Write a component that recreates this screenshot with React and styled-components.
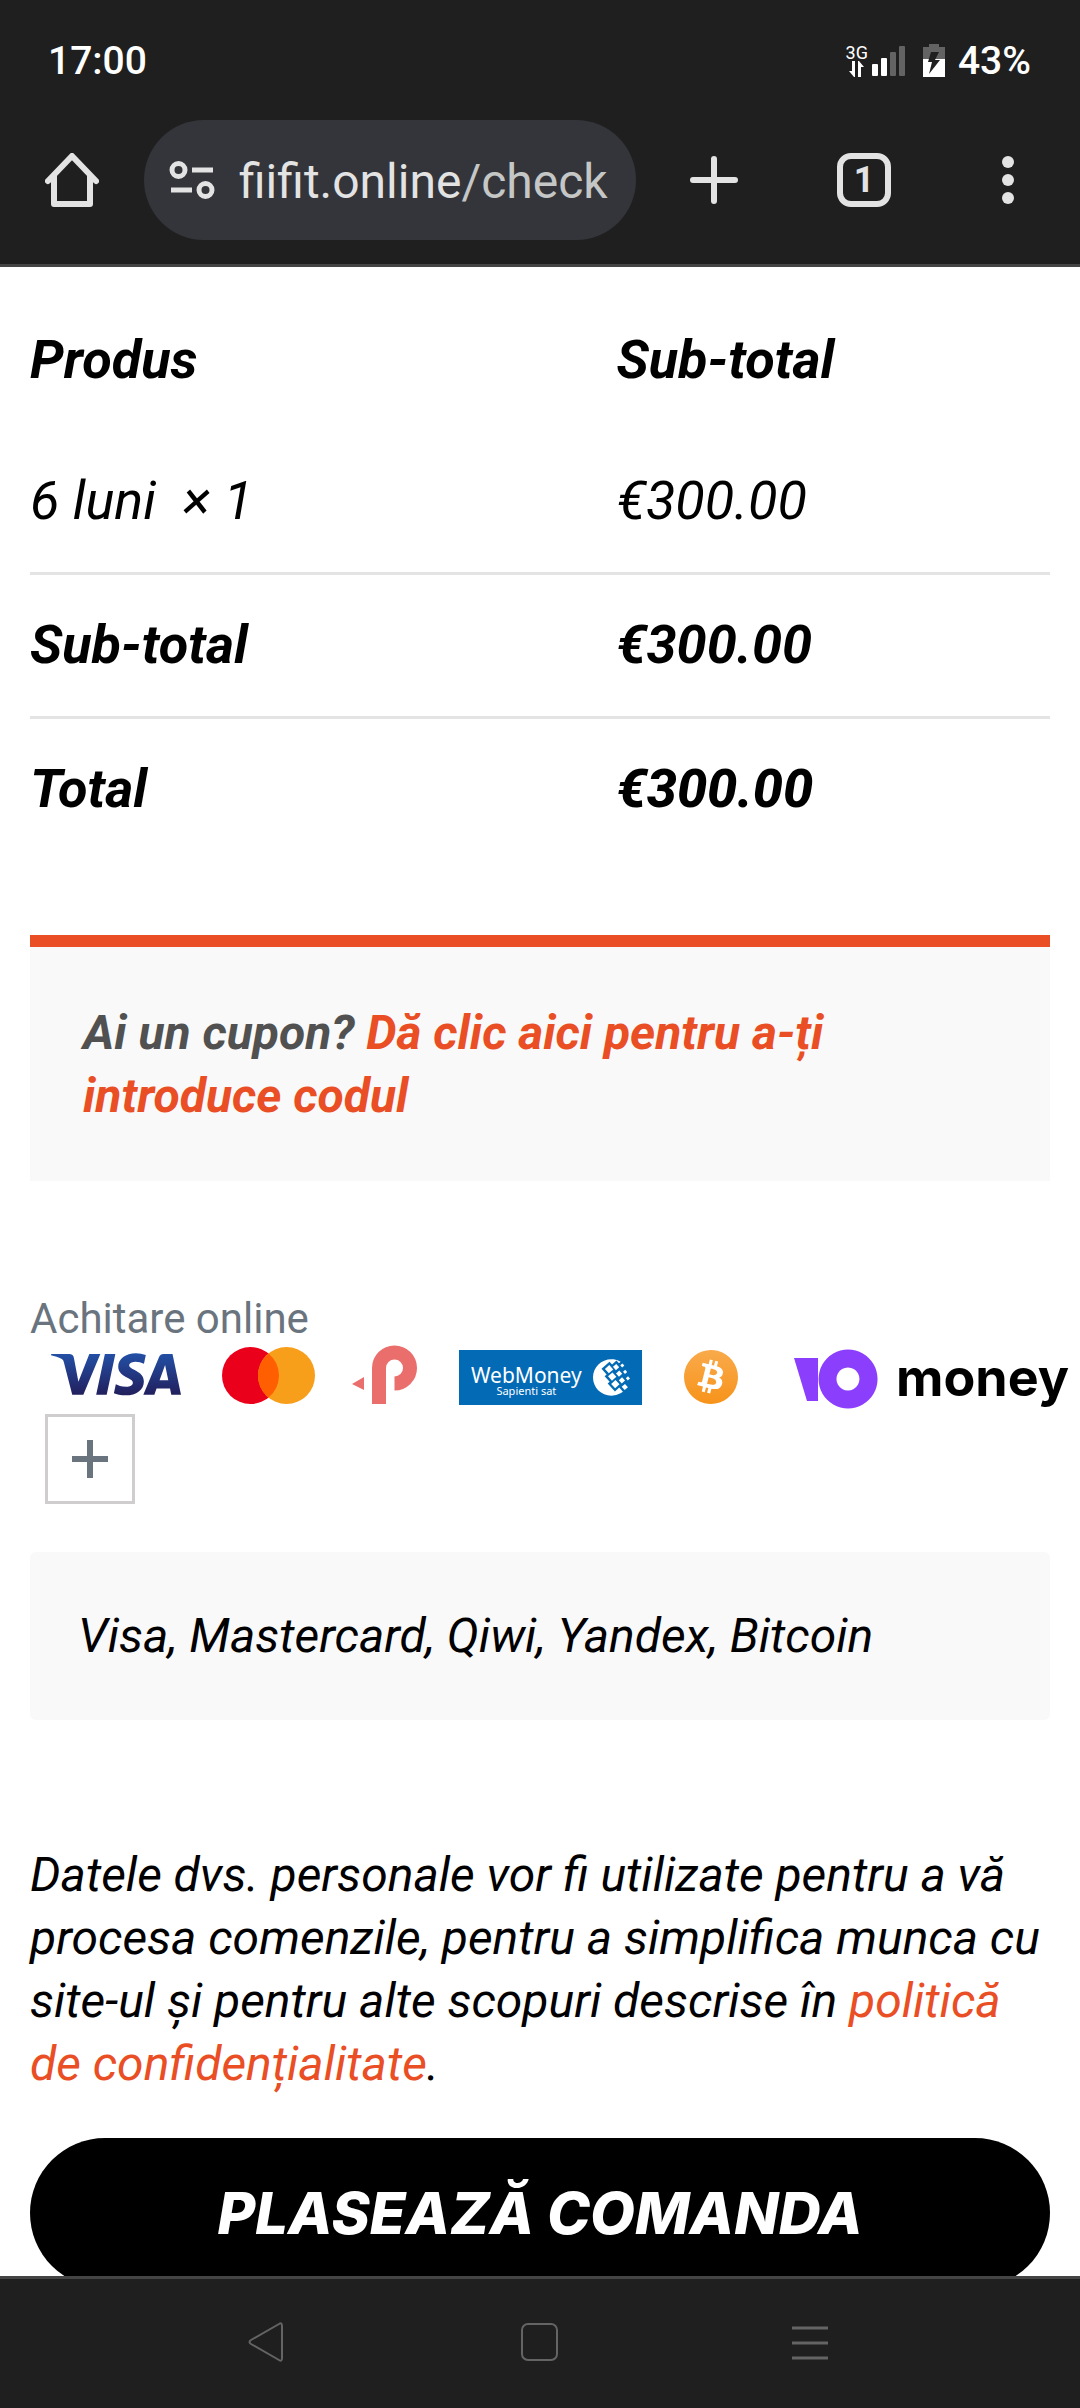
import React from "react";
import styled, { createGlobalStyle } from "styled-components";
import { SiBitcoin, SiVisa, SiWebmoney } from "react-icons/si";

const ORDER_ROWS = [
  { label: "6 luni\u00a0 × 1", price: "€300.00", weight: 400, priceWeight: 400 },
  { label: "Sub-total", price: "€300.00", weight: 700, priceWeight: 700 },
  { label: "Total", price: "€300.00", weight: 700, priceWeight: 800 },
];

function StatusIcons() {
  return (
    <StatusGroup>
      <Signal>
        <NetworkType>
          <span>3G</span>
          <svg width="15" height="16" viewBox="0 0 15 16" fill="#fff">
            <path d="M3 0h3v16H5L0 10h3zM9 16V0h1l5 6h-3v10z" />
          </svg>
        </NetworkType>
        <svg width="34" height="32" viewBox="0 0 34 32" fill="#fff">
          <rect x="0" y="19" width="6" height="12" rx="1" />
          <rect x="9" y="13" width="6" height="18" rx="1" />
          <rect x="18" y="7" width="6" height="24" rx="1" fill="#636363" />
          <rect x="27" y="1" width="6" height="30" rx="1" fill="#636363" />
        </svg>
      </Signal>
      <svg width="22" height="34" viewBox="0 0 22 34">
        <path d="M6 0h10v3h6v13H0V3h6z" fill="#636363" />
        <path d="M0 15h22v18H0z" fill="#fff" />
        <path d="M8 8h8l-4 8h5L6 30l3-12H5z" fill="#1f1f1f" />
      </svg>
      <StatusText>43%</StatusText>
    </StatusGroup>
  );
}

function BrowserHeader() {
  return (
    <Header>
      <StatusBar>
        <StatusText>17:00</StatusText>
        <StatusIcons />
      </StatusBar>
      <Toolbar>
        <IconButton aria-label="Home">
          <svg width="54" height="54" viewBox="0 0 54 54" {...lineIcon}>
            <path d="M3 28 27 3l24 25M9 22v29h36V22" />
          </svg>
        </IconButton>
        <AddressBar>
          <svg
            width="46"
            height="38"
            viewBox="0 0 46 38"
            fill="none"
            stroke="#e3e3e3"
            strokeWidth="5"
          >
            <circle cx="9.500" cy="9" r="6.500" />
            <circle cx="36.500" cy="29" r="6.500" />
            <path d="M23 9h21M2 29h21" />
          </svg>
          <Url>
            fiifit.online<UrlPath>/check</UrlPath>
          </Url>
        </AddressBar>
        <Actions>
          <IconButton aria-label="New tab">
            <svg width="54" height="54" viewBox="0 0 54 54" {...lineIcon}>
              <path d="M27 6v42M6 27h42" />
            </svg>
          </IconButton>
          <TabsButton aria-label="Open tabs">1</TabsButton>
          <IconButton aria-label="More">
            <svg width="42" height="54" viewBox="0 0 42 54" fill="#e3e3e3">
              <circle cx="21" cy="9" r="6" />
              <circle cx="21" cy="27" r="6" />
              <circle cx="21" cy="45" r="6" />
            </svg>
          </IconButton>
        </Actions>
      </Toolbar>
    </Header>
  );
}

function OrderTable() {
  return (
    <Table>
      <thead>
        <tr>
          <HeadCell scope="col">Produs</HeadCell>
          <HeadCell scope="col">Sub-total</HeadCell>
        </tr>
      </thead>
      <tbody>
        {ORDER_ROWS.map((row) => (
          <OrderRow key={row.label}>
            <Cell $weight={row.weight}>{row.label}</Cell>
            <Cell $weight={row.priceWeight}>{row.price}</Cell>
          </OrderRow>
        ))}
      </tbody>
    </Table>
  );
}

function PaymentLogos() {
  return (
    <Logos>
      <svg width="0" height="0" aria-hidden="true">
        <defs>
          <linearGradient id="visaBlue" x1="0" y1="0" x2="0" y2="1">
            <stop offset="0" stopColor="#2350a6" />
            <stop offset="1" stopColor="#221f5c" />
          </linearGradient>
          <linearGradient id="bitcoinOrange" x1="0" y1="0" x2="0" y2="1">
            <stop offset="0" stopColor="#f9aa4b" />
            <stop offset="1" stopColor="#f7931a" />
          </linearGradient>
        </defs>
      </svg>
      <VisaLogo viewBox="0 7.7 24 9.6" fill="url(#visaBlue)" strokeWidth="0" />
      <svg width="94" height="60" viewBox="0 0 94 60">
        <circle cx="28.500" cy="28.500" r="28.500" fill="#eb001b" />
        <circle cx="64.500" cy="28.500" r="28.500" fill="#f79e1b" />
        <path d="M46.500 6.400a28.500 28.500 0 0 1 0 44.200a28.500 28.500 0 0 1 0-44.200" fill="#ff5f00" />
      </svg>
      <svg width="71" height="64" viewBox="0 -2 71 64">
        <path d="M0 37l12-7v13z" fill="#ea6e6c" />
        <path
          d="M27 57V21a15.500 15.500 0 1 1 15.500 15.500"
          fill="none"
          stroke="#ea6e6c"
          strokeWidth="14"
        />
      </svg>
      <WebMoney>
        <WebMoneyText>
          WebMoney
          <small>Sapienti sat</small>
        </WebMoneyText>
        <SiWebmoney size={37} />
      </WebMoney>
      <BitcoinLogo fill="url(#bitcoinOrange)" strokeWidth="0" />
      <YooMoney>
        <svg width="84" height="64" viewBox="0 -2 84 64" fill="#8b3ffd">
          <path d="M0 11h24v43H13z" />
          <path
            fillRule="evenodd"
            d="M54 2.500a29.500 29.500 0 1 0 .1 0zM54 20.500a11.500 11.500 0 1 1-.1 0z"
          />
        </svg>
        money
      </YooMoney>
    </Logos>
  );
}

function SystemNav() {
  return (
    <NavBar>
      <IconButton aria-label="Back">
        <svg width="40" height="40" viewBox="0 0 40 40" {...navIcon}>
          <path d="M31 2Q34 0 34 4v32q0 4-3 2L3 22q-3-2 0-4z" />
        </svg>
      </IconButton>
      <IconButton aria-label="Home screen">
        <svg width="40" height="40" viewBox="0 0 40 40" {...navIcon}>
          <rect x="2" y="2" width="35" height="36" rx="6" />
        </svg>
      </IconButton>
      <IconButton aria-label="Recent apps">
        <svg width="40" height="40" viewBox="0 0 40 40" {...navIcon} strokeWidth="3">
          <path d="M0 6h36M0 21h36M0 36h36" />
        </svg>
      </IconButton>
    </NavBar>
  );
}

export default function App() {
  return (
    <>
      <GlobalStyle />
      <Screen>
        <BrowserHeader />
        <Main>
          <OrderTable />
          <Coupon>
            Ai un cupon? <a href="#cupon">Dă clic aici pentru a-ți introduce codul</a>
          </Coupon>
          <PaymentTitle>Achitare online</PaymentTitle>
          <PaymentLogos />
          <MoreButton aria-label="Mai multe metode">
            <svg width="36" height="38" viewBox="0 0 36 38" stroke="#6a747e" strokeWidth="6">
              <path d="M18 0v38M0 19h36" />
            </svg>
          </MoreButton>
          <PaymentInfo>Visa, Mastercard, Qiwi, Yandex, Bitcoin</PaymentInfo>
          <Privacy>
            Datele dvs. personale vor fi utilizate pentru a vă procesa comenzile,
            pentru a simplifica munca cu site-ul și pentru alte scopuri descrise în{" "}
            <a href="#politica">politică de confidențialitate</a>.
          </Privacy>
          <SubmitButton type="submit">Plasează comanda</SubmitButton>
        </Main>
        <SystemNav />
      </Screen>
    </>
  );
}

const lineIcon = {
  fill: "none",
  stroke: "#e3e3e3",
  strokeWidth: 6,
  strokeLinecap: "round",
  strokeLinejoin: "round",
};

const navIcon = {
  fill: "none",
  stroke: "#646464",
  strokeWidth: 2,
  strokeLinejoin: "round",
};

const GlobalStyle = createGlobalStyle`
  * {
    box-sizing: border-box;
  }
  body {
    margin: 0;
    background-color: #fff;
    color: #000;
    font-family: Roboto, sans-serif;
  }
  button {
    border: none;
    padding: 0;
    background: none;
    color: inherit;
    font: inherit;
  }
  a {
    color: #e94e25;
    text-decoration: none;
  }
  svg {
    display: block;
    flex-shrink: 0;
  }
`;

const Screen = styled.div`
  display: flex;
  flex-direction: column;
  height: 100vh;
`;

const Header = styled.header`
  flex-shrink: 0;
  padding-bottom: 24px;
  border-bottom: 3px solid #444;
  background-color: #1f1f1f;
`;

const StatusBar = styled.div`
  display: flex;
  align-items: center;
  justify-content: space-between;
  height: 120px;
  padding: 2px 49px 0 48px;
`;

const StatusText = styled.span`
  color: #fff;
  font-size: 39px;
  font-weight: 500;
`;

const StatusGroup = styled.div`
  display: flex;
  align-items: center;
  gap: 13px;
`;

const Signal = styled.div`
  display: flex;
  align-items: flex-end;
  gap: 4px;
  margin-right: 4px;
`;

const NetworkType = styled.div`
  display: flex;
  flex-direction: column;
  align-items: center;
  color: #fff;
  font-size: 18px;
  line-height: 16px;
`;

const Toolbar = styled.div`
  display: flex;
  align-items: center;
  padding: 0 51px 0 45px;
`;

const IconButton = styled.button`
  display: flex;
`;

const AddressBar = styled.button`
  display: flex;
  flex: 1;
  align-items: center;
  gap: 24px;
  height: 120px;
  margin: 0 51px 0 45px;
  padding: 0 25px;
  border-radius: 60px;
  background-color: #34353a;
  overflow: hidden;
`;

const Url = styled.span`
  padding-top: 2px;
  color: #e3e3e3;
  font-size: 48px;
  white-space: nowrap;
`;

const UrlPath = styled.span`
  color: #c4c7c5;
`;

const Actions = styled.div`
  display: flex;
  gap: 96px;
`;

const TabsButton = styled.button`
  && {
    width: 54px;
    height: 54px;
    border: 6px solid #e3e3e3;
    border-radius: 14px;
    color: #e3e3e3;
    font-size: 36px;
    font-weight: 700;
    line-height: 42px;
  }
`;

const Main = styled.main`
  flex: 1;
  min-height: 0;
  padding: 23px 30px 0;
  overflow: hidden;
  font-size: 48px;
  font-style: italic;
  line-height: 63px;
`;

const Table = styled.table`
  width: 100%;
  border-collapse: separate;
  border-spacing: 0;
  table-layout: fixed;
  font-size: 54px;
  line-height: 61px;
  text-align: left;
`;

const HeadCell = styled.th`
  padding: 39px 0 41px;
  font-weight: 700;

  &:first-child {
    width: 57.5%;
  }
`;

const Cell = styled.td`
  padding: 39px 0 41px;
  font-weight: ${(props) => props.$weight};
`;

const OrderRow = styled.tr`
  &:not(:last-child) ${Cell} {
    border-bottom: 3px solid #e4e4e4;
  }
`;

const Coupon = styled.div`
  margin-top: 75px;
  padding: 54px 53px;
  border-top: 12px solid #e94e25;
  background-color: #f9f9f9;
  color: #515151;
  font-weight: 700;
`;

const PaymentTitle = styled.div`
  margin-top: 110px;
  color: #6a747e;
  font-size: 42px;
  font-style: normal;
  line-height: 56px;
`;

const Logos = styled.div`
  display: flex;
  align-items: center;
  gap: 36px;
  height: 60px;
  margin-left: -15px;
  font-style: normal;
`;

const VisaLogo = styled(SiVisa)`
  width: 130px;
  height: 52px;
  margin-right: 5px;
`;

const BitcoinLogo = styled(SiBitcoin)`
  width: 66px;
  height: 54px;
`;

const WebMoney = styled.div`
  display: flex;
  flex-shrink: 0;
  align-items: center;
  justify-content: space-between;
  width: 183px;
  height: 55px;
  padding: 0 12px;
  background-color: #036ab5;
  color: #fff;
`;

const WebMoneyText = styled.div`
  padding-top: 8px;
  font-family: "Noto Sans", sans-serif;
  font-size: 21px;
  line-height: 20px;
  text-align: center;

  small {
    display: block;
    font-size: 11px;
    line-height: 12px;
  }
`;

const YooMoney = styled.div`
  display: flex;
  align-items: center;
  gap: 18px;
  margin-left: 14px;
  font-family: Inter, sans-serif;
  font-size: 52px;
  font-weight: 700;
`;

const MoreButton = styled.button`
  && {
    display: flex;
    align-items: center;
    justify-content: center;
    width: 90px;
    height: 90px;
    margin: 7px 0 0 15px;
    border: 3px solid #d0cdce;
  }
`;

const PaymentInfo = styled.div`
  margin-top: 48px;
  padding: 52px 48px 53px;
  border-radius: 6px;
  background-color: #f9f9f9;
`;

const Privacy = styled.p`
  margin: 123px 0 43px;
`;

const SubmitButton = styled.button`
  && {
    width: 100%;
    height: 150px;
    border-radius: 75px;
    background-color: #000;
    color: #fff;
    font-family: Inter, sans-serif;
    font-size: 58px;
    font-style: italic;
    font-weight: 800;
    text-transform: uppercase;
  }
`;

const NavBar = styled.nav`
  display: grid;
  grid-template-columns: repeat(3, 1fr);
  flex-shrink: 0;
  align-items: center;
  justify-items: center;
  height: 132px;
  padding: 0 132px 3px;
  border-top: 3px solid #444;
  background-color: #1f1f1f;
`;
